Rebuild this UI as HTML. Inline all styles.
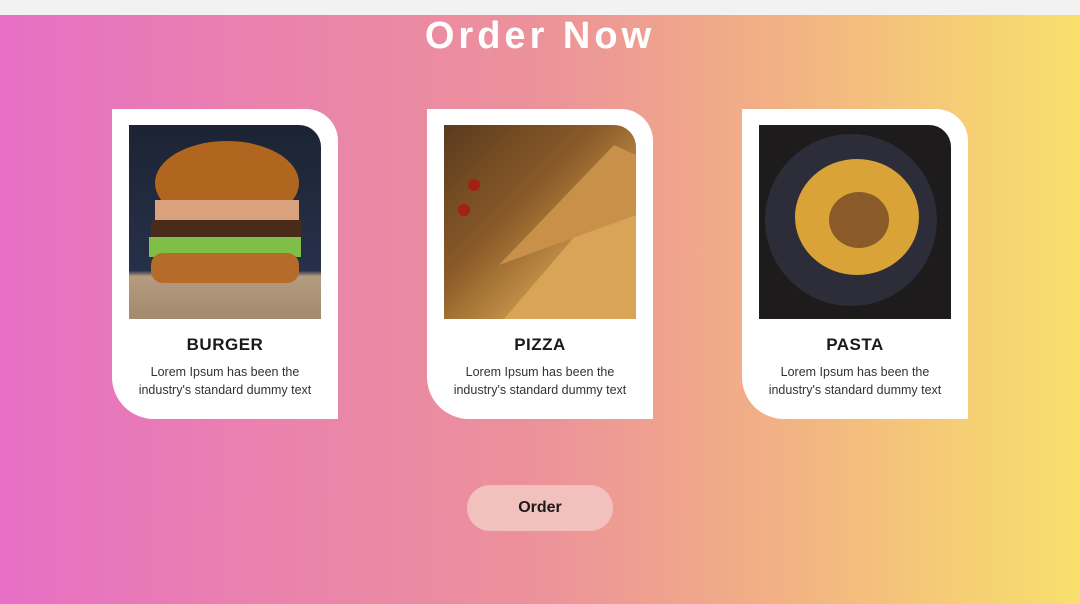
<!DOCTYPE html>
<html><head><style>
*{margin:0;padding:0;box-sizing:border-box}
body{width:1080px;height:604px;overflow:hidden;font-family:"Liberation Sans",sans-serif;position:relative;
background:linear-gradient(90deg,#e76fc5 0%,#ea82ad 25%,#ec929a 50%,#f2b184 72%,#f8e06c 100%)}
.top{position:absolute;left:0;top:0;width:1080px;height:15px;background:#f2f2f2}
h1{position:absolute;top:14px;left:0;width:1080px;text-align:center;color:#fff;font-size:38px;font-weight:bold;letter-spacing:4px;line-height:44px}
.card{position:absolute;top:109px;width:226px;height:310px;background:#fff;border-radius:0 32px 0 42px}
.img{position:absolute;left:17px;top:16px;width:192px;height:194px;border-radius:0 22px 0 0;overflow:hidden}
.card h2{position:absolute;top:226px;width:100%;text-align:center;font-size:17px;color:#1a1a1a;letter-spacing:.5px}
.card p{position:absolute;top:254px;width:100%;text-align:center;font-size:12.5px;line-height:18px;color:#333}
.btn{position:absolute;left:467px;top:485px;width:146px;height:46px;border-radius:23px;background:#f2c1bd;text-align:center;line-height:46px;font-weight:bold;font-size:16px;color:#1a1a1a}
</style></head><body>
<div class="top"></div>
<h1>Order Now</h1>
<div class="card" style="left:112px"><div class="img" style="background:linear-gradient(180deg,#1c2433 0%,#26304a 75%,#b59c80 78%,#a38a6e 100%)">
<svg width="192" height="194"><ellipse cx="98" cy="58" rx="72" ry="42" fill="#b0661f"/><rect x="26" y="75" width="144" height="25" fill="#d9a27d"/><rect x="22" y="95" width="150" height="18" fill="#4a2b1a"/><rect x="20" y="112" width="152" height="20" fill="#7fbf48"/><rect x="22" y="128" width="148" height="30" rx="12" fill="#b56b2a"/></svg></div>
<h2>BURGER</h2><p>Lorem Ipsum has been the<br>industry's standard dummy text</p></div>
<div class="card" style="left:427px"><div class="img" style="background:linear-gradient(135deg,#5a3a1e,#8a5a28 40%,#c9974a 70%,#b07a3c)">
<svg width="192" height="194"><path d="M60 194 L192 40 L192 194Z" fill="#d8a457"/><path d="M55 140 L170 20 L192 30 L192 90Z" fill="#c99049"/><circle cx="30" cy="60" r="6" fill="#a32016"/><circle cx="20" cy="85" r="6" fill="#a32016"/></svg></div>
<h2>PIZZA</h2><p>Lorem Ipsum has been the<br>industry's standard dummy text</p></div>
<div class="card" style="left:742px"><div class="img" style="background:#1e1b1d">
<svg width="192" height="194"><circle cx="92" cy="95" r="86" fill="#2c2d38"/><ellipse cx="98" cy="92" rx="62" ry="58" fill="#d9a338"/><ellipse cx="100" cy="95" rx="30" ry="28" fill="#8a5a28"/></svg></div>
<h2>PASTA</h2><p>Lorem Ipsum has been the<br>industry's standard dummy text</p></div>
<div class="btn">Order</div>
</body></html>
